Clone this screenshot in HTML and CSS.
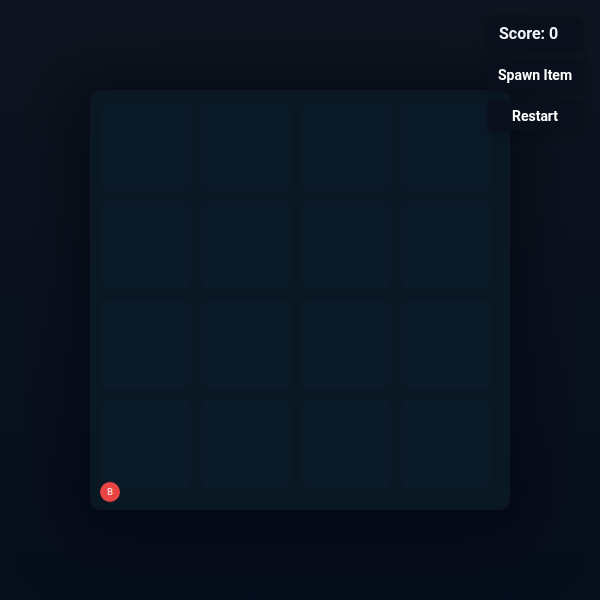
FILE: index.html
```html
<!DOCTYPE html>
<html lang="en">
<head>
    <meta charset="UTF-8">
    <meta name="viewport" content="width=device-width, initial-scale=1.0">
    <title>Merge Board</title>
    <link rel="stylesheet" href="styles.css">
</head>
<body>
    <div class="hud">
        <div class="score">Score: <span id="score">0</span></div>
        <button type="button" class="hud-button">Spawn Item</button>
        <button type="button" class="hud-button">Restart</button>
    </div>

    <div class="board">
        <div class="grid">
            <div class="cell"></div>
            <div class="cell"></div>
            <div class="cell"></div>
            <div class="cell"></div>
            <div class="cell"></div>
            <div class="cell"></div>
            <div class="cell"></div>
            <div class="cell"></div>
            <div class="cell"></div>
            <div class="cell"></div>
            <div class="cell"></div>
            <div class="cell"></div>
            <div class="cell"></div>
            <div class="cell"></div>
            <div class="cell"></div>
            <div class="cell"></div>
        </div>
        <div class="badge">B</div>
    </div>
</body>
</html>
```

FILE: styles.css
```css
html {
    height: 100%;
}

body {
    font-family: Roboto, "Liberation Sans", sans-serif;
    background: linear-gradient(to bottom, #0f1520, #060e1d);
    margin: 0;
    height: 100%;
    display: flex;
    align-items: center;
    justify-content: center;
    color: #f1f4f8;
}

.hud {
    position: fixed;
    top: 17px;
    right: 17px;
    z-index: 2;
    width: 96px;
    display: flex;
    flex-direction: column;
    gap: 10px;
}

.score {
    background-color: #0a101b;
    border-radius: 6px;
    padding: 7px 0 7px 12px;
    font-size: 16px;
    font-weight: bold;
    box-shadow: 0 2px 8px rgba(0, 0, 0, 0.25);
}

.hud-button {
    background-color: #0a101b;
    color: #ffffff;
    border: none;
    border-radius: 6px;
    font-family: inherit;
    font-size: 14px;
    font-weight: bold;
    height: 30px;
    padding: 0;
    cursor: pointer;
    box-shadow: 0 2px 8px rgba(0, 0, 0, 0.25);
}

.hud-button + .hud-button {
    margin-top: 1px;
}

.board {
    position: relative;
    height: 398px;
    padding: 12px 10px 10px 11px;
    width: 399px;
    background-color: #0a1824;
    border-radius: 10px;
    box-shadow: 0 10px 60px 20px rgba(2, 6, 14, 0.55);
}

.grid {
    display: grid;
    grid-template-columns: repeat(4, 90px);
    grid-template-rows: repeat(4, 89px);
    gap: 10px;
}

.cell {
    background-color: #0b1a29;
    border-radius: 8px;
}

.badge {
    position: absolute;
    left: 10px;
    bottom: 8px;
    width: 20px;
    height: 20px;
    border-radius: 50%;
    background-color: #e84444;
    color: #ffd7d7;
    font-size: 9px;
    font-weight: 600;
    display: flex;
    align-items: center;
    justify-content: center;
}
```
